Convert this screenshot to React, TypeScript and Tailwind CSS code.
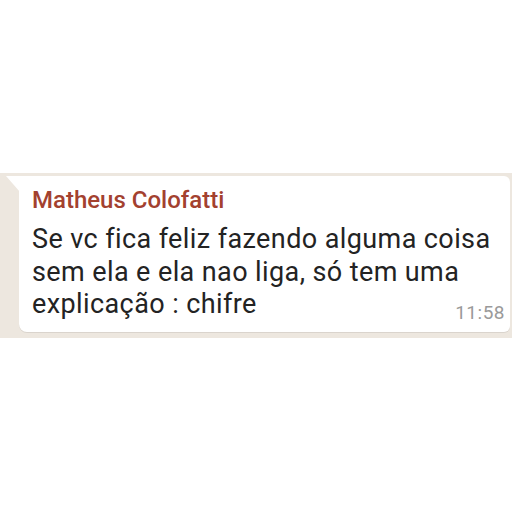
import React from "react";

const lines = [
  "Se vc fica feliz fazendo alguma coisa",
  "sem ela e ela nao liga, só tem uma",
  "explicação : chifre",
];

export default function App() {
  return (
    <div className="w-[512px] h-[512px] bg-white flex flex-col" style={{ fontFamily: "Roboto, 'Noto Sans', sans-serif" }}>
      <div className="mt-[173px] h-[165px] bg-[#ede7df] pt-[3px] pl-[19px] pr-[2px]">
        <div className="relative bg-white rounded-r-[6px] rounded-bl-[8px] h-[156px] shadow-[0_1px_0_rgba(0,0,0,0.08)] pl-[13px] pt-[10px]">
          {/* tail */}
          <svg className="absolute -left-[13px] top-0" width="14" height="16" viewBox="0 0 14 16">
            <path d="M0 0 H14 V16 Z" fill="#ffffff" />
          </svg>
          <div className="w-fit text-[24px] leading-[28px] font-medium text-[#a3412f]">Matheus Colofatti</div>
          <div className="mt-[9px] flex flex-col items-start text-[27px] leading-[32.5px] tracking-[0.4px] text-[#232323]">
            {lines.map((l) => (
              <div key={l} className="w-fit whitespace-nowrap">{l}</div>
            ))}
          </div>
          <div className="absolute right-[5px] bottom-[8px] text-[19px] leading-[22px] tracking-[0.5px] text-[#9a9a9a]">11:58</div>
        </div>
      </div>
    </div>
  );
}
